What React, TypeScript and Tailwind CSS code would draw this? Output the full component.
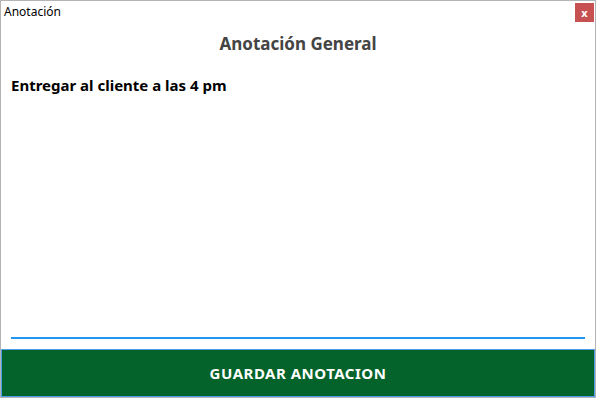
import React, { useState } from 'react';

export default function App() {
  const [nota, setNota] = useState('Entregar al cliente a las 4 pm');

  return (
    <div
      className="w-[596px] h-[398px] bg-white flex flex-col border-x border-t border-b border-[#b4b4b4] overflow-hidden"
      style={{ fontFamily: '"Noto Sans", "Open Sans", sans-serif' }}
    >
      {/* Barra de titulo */}
      <div className="flex items-start justify-between h-[22px] pl-[3px] pr-[1px] pt-[2px]">
        <span className="text-[12px] leading-[18px] text-black">Anotación</span>
        <button className="w-[19px] h-[19px] bg-[#c75050] flex items-center justify-center text-white text-[11px] font-bold leading-none">
          x
        </button>
      </div>

      {/* Encabezado */}
      <h1 className="text-center text-[17px] font-bold text-[#444444] leading-[24px] mt-[9px]">
        Anotación General
      </h1>

      {/* Area de texto */}
      <div className="flex-1 flex flex-col px-[10px] mt-[7px]">
        <textarea
          value={nota}
          onChange={(e) => setNota(e.target.value)}
          autoFocus
          className="flex-1 resize-none outline-none pt-[11px] text-[15px] font-bold text-black leading-[22px] caret-[#1e88e5] border-b-2 border-[#2196f3]"
          style={{ fontFamily: '"Noto Sans", "Open Sans", sans-serif' }}
        />
      </div>

      {/* Boton guardar */}
      <button className="mt-[10px] h-[48px] bg-[#03632a] border border-[#4a9ee8] text-white text-[15px] font-bold tracking-[0.5px] flex items-center justify-center">
        GUARDAR ANOTACION
      </button>
    </div>
  );
}
